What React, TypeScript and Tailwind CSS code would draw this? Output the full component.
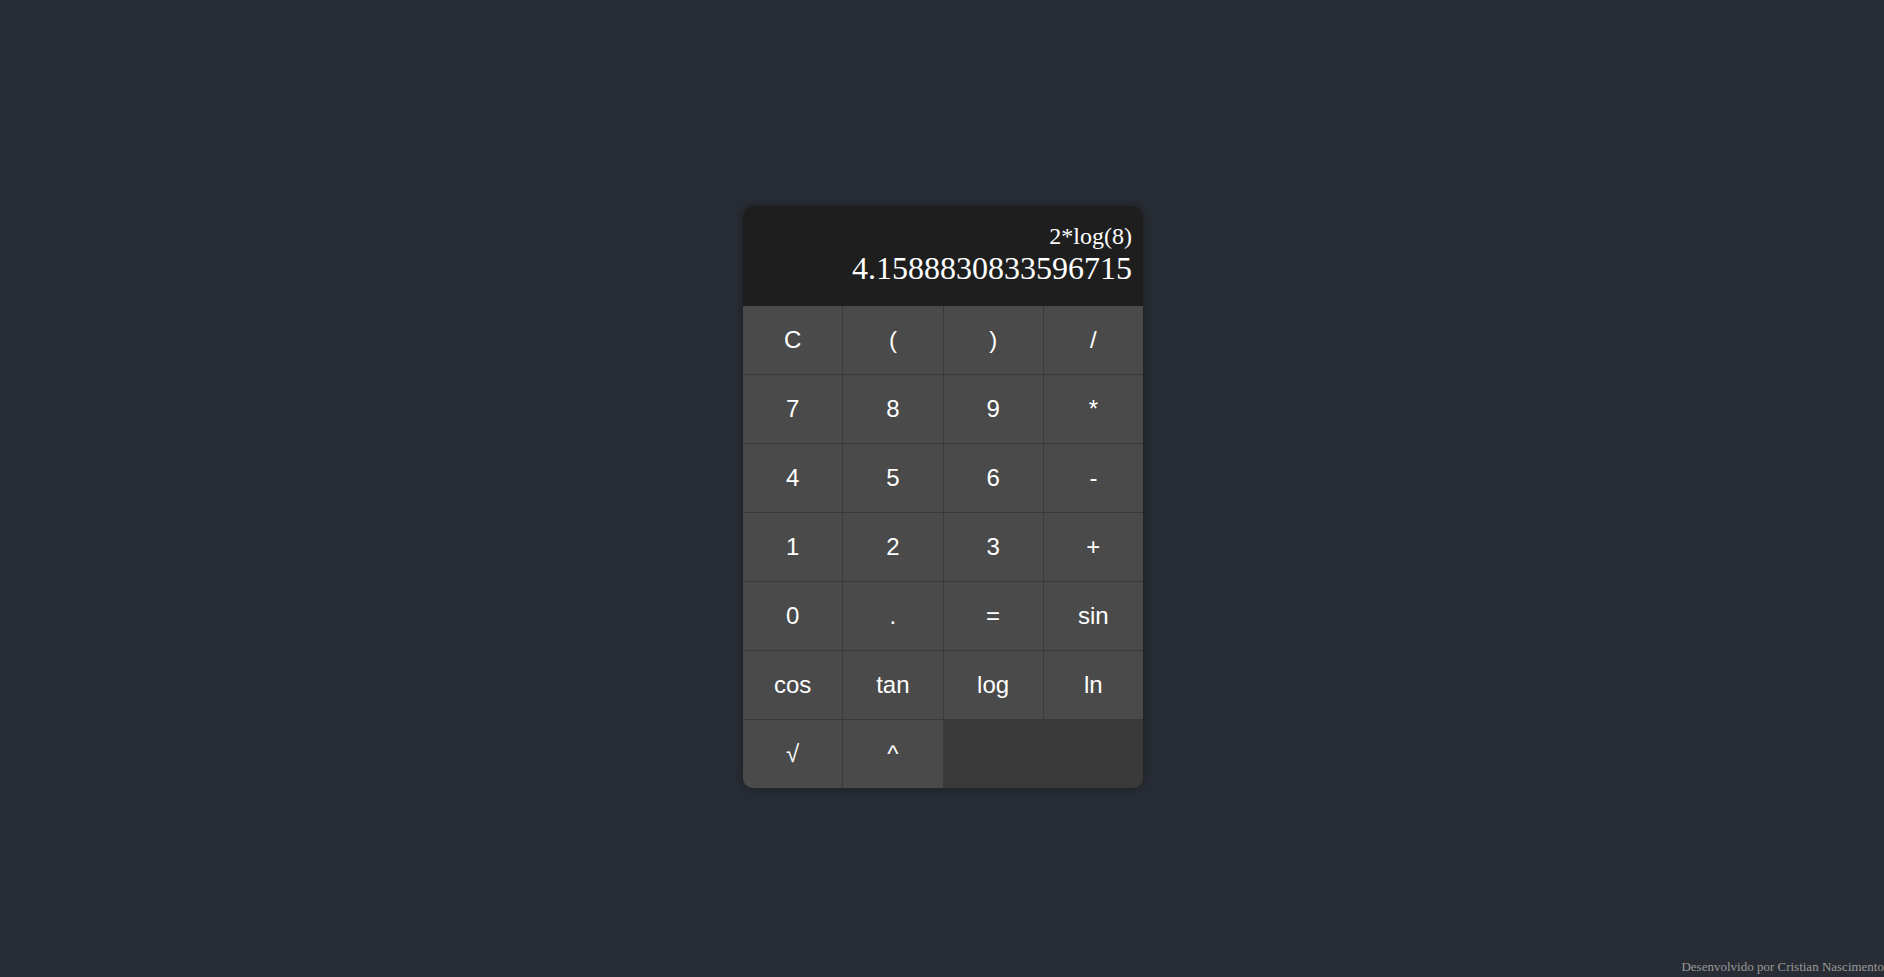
import React from "react";

const buttons = [
  "C", "(", ")", "/",
  "7", "8", "9", "*",
  "4", "5", "6", "-",
  "1", "2", "3", "+",
  "0", ".", "=", "sin",
  "cos", "tan", "log", "ln",
  "√", "^",
];

export default function App() {
  return (
    <div className="h-screen w-full bg-[#282c34] flex flex-col overflow-hidden">
      <main className="flex-1 flex items-center justify-center pt-[35px] pl-[2px]">
        <div className="w-[400px] rounded-[10px] overflow-hidden shadow-[0_0_10px_rgba(0,0,0,0.35)] bg-[#3a3a3a]">
          <div className="h-[100px] bg-[#1e1e1e] flex flex-col justify-end items-end pr-[11px] pb-[19px] text-white font-['Liberation_Serif',serif]">
            <div className="text-[24px] leading-[27.6px]">2*log(8)</div>
            <div className="text-[32px] leading-[36.8px]">4.1588830833596715</div>
          </div>
          <div className="grid grid-cols-4 gap-px bg-[#3a3a3a]">
            {buttons.map((b) => (
              <button
                key={b}
                className="h-[68px] bg-[#4a4a4a] text-white text-[24px] leading-none flex items-center justify-center font-['Liberation_Sans',Arial,sans-serif]"
              >
                {b}
              </button>
            ))}
          </div>
        </div>
      </main>
      <footer className="text-right pb-[3px] text-[13px] leading-[15px] text-[#9a9a9a] font-['Liberation_Serif',serif]">
        Desenvolvido por Cristian Nascimento
      </footer>
    </div>
  );
}
